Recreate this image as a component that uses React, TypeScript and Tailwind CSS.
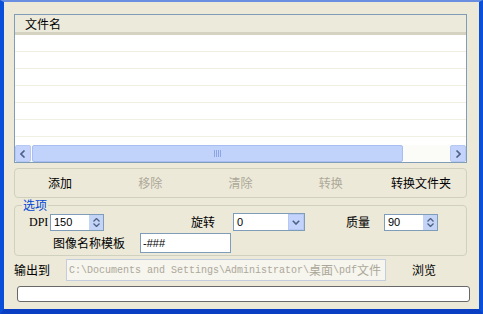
import React from 'react';

const cjk = '"Noto Sans CJK SC", "Liberation Sans", sans-serif';

function Spinner({ value, width }: { value: string; width: string }) {
  return (
    <div className={`flex h-[17px] ${width} border border-[#7F9DB9] bg-white`}>
      <div className="flex-1 pl-[3px] text-[11px] leading-[15px] text-black font-['Liberation_Sans']">{value}</div>
      <div className="flex w-[15px] flex-col items-center justify-center gap-[1px] border-l border-white bg-[#C4D4F7]">
        <svg width="7" height="4" viewBox="0 0 7 4"><path d="M0.5 3.5 L3.5 0.5 L6.5 3.5" fill="none" stroke="#4D6185" strokeWidth="1.3" /></svg>
        <svg width="7" height="4" viewBox="0 0 7 4"><path d="M0.5 0.5 L3.5 3.5 L6.5 0.5" fill="none" stroke="#4D6185" strokeWidth="1.3" /></svg>
      </div>
    </div>
  );
}

function ScrollArrow({ dir }: { dir: 'left' | 'right' }) {
  return (
    <div className="flex h-full w-[16px] items-center justify-center rounded-[2px] border border-[#B5C8F3] bg-[#C3D3FB]">
      <svg width="6" height="8" viewBox="0 0 6 8">
        <path d={dir === 'left' ? 'M4.5 0.5 L1 4 L4.5 7.5' : 'M1.5 0.5 L5 4 L1.5 7.5'} fill="none" stroke="#4D6185" strokeWidth="1.6" />
      </svg>
    </div>
  );
}

export default function App() {
  const rows = Array.from({ length: 7 });
  return (
    <div className="h-[314px] w-[483px] overflow-hidden border-l-4 border-r-4 border-b-[5px] border-t-2 border-l-[#0A4FD9] border-r-[#0A4FD9] border-b-[#0A3FC4] border-t-[#6B8FE0] bg-[#ECE9D8]" style={{ fontFamily: cjk }}>
      <div className="flex flex-col pl-[10px] pt-[12px] text-[12px] text-black">
        {/* file list */}
        <div className="flex h-[149px] w-[453px] flex-col border border-[#7F9DB9] bg-white">
          <div className="flex h-[20px] items-center border-b-[3px] border-b-[#D6D2C2] bg-[#EBEADB] pl-[10px] leading-none">文件名</div>
          <div className="flex-1 overflow-hidden">
            {rows.map((_, i) => (
              <div key={i} className="h-[17px] border-b border-[#F1EFE2]" />
            ))}
          </div>
          <div className="flex h-[17px] items-stretch bg-[#FBFBF8]">
            <ScrollArrow dir="left" />
            <div className="ml-[1px] flex w-[371px] items-center justify-center rounded-[2px] border border-[#A8BEF2] bg-[#C1D3FB]">
              <svg width="8" height="7" viewBox="0 0 8 7">
                <path d="M0.5 0 V7 M2.5 0 V7 M4.5 0 V7 M6.5 0 V7" stroke="#8DA5E4" strokeWidth="1" />
              </svg>
            </div>
            <div className="flex-1 bg-[#FBFBF8]" />
            <ScrollArrow dir="right" />
          </div>
        </div>

        {/* buttons */}
        <div className="mt-[5px] grid h-[30px] w-[453px] grid-cols-5 items-center rounded-[4px] border border-[#D0D0BF]">
          <div className="text-center">添加</div>
          <div className="text-center text-[#ACA899]">移除</div>
          <div className="text-center text-[#ACA899]">清除</div>
          <div className="text-center text-[#ACA899]">转换</div>
          <div className="text-center">转换文件夹</div>
        </div>

        {/* options */}
        <div className="relative mt-[7px] h-[51px] w-[453px] rounded-[4px] border border-[#D0D0BF]">
          <div className="absolute -top-[8px] left-[7px] bg-[#ECE9D8] px-[1px] leading-[14px] text-[#0046D5]">选项</div>
          <div className="flex items-center pt-[7px]">
            <div className="ml-[14px] w-[21px] text-[12px] font-['Liberation_Serif'] leading-none">DPI</div>
            <Spinner value="150" width="w-[54px]" />
            <div className="ml-[87px] w-[42px]">旋转</div>
            <div className="flex h-[18px] w-[72px] border border-[#7F9DB9] bg-white">
              <div className="flex-1 pl-[3px] text-[11px] leading-[16px] font-['Liberation_Sans']">0</div>
              <div className="flex w-[16px] items-center justify-center border border-[#B5C8F3] bg-[#C3D3FB]">
                <svg width="8" height="5" viewBox="0 0 8 5"><path d="M0.8 0.8 L4 4 L7.2 0.8" fill="none" stroke="#4D6185" strokeWidth="1.6" /></svg>
              </div>
            </div>
            <div className="ml-[41px] w-[38px]">质量</div>
            <Spinner value="90" width="w-[54px]" />
          </div>
          <div className="mt-[2px] flex items-center">
            <div className="ml-[38px] w-[87px] text-[12px]">图像名称模板</div>
            <div className="h-[20px] w-[91px] border border-[#7F9DB9] bg-white pl-[2px] text-[11px] leading-[18px] font-['Liberation_Sans']">-###</div>
          </div>
        </div>

        {/* output */}
        <div className="mt-[3px] flex h-[22px] items-center">
          <div className="w-[52px]">输出到</div>
          <div className="flex h-[22px] w-[320px] items-center border border-[#C3CDDD] bg-[#F6F5EE] pl-[2px] text-[#ACA899]">
            <span className="font-['Liberation_Mono'] text-[10px]">C:\Documents and Settings\Administrator\</span>
            <span className="text-[12px]">桌面</span>
            <span className="font-['Liberation_Mono'] text-[10px]">\pdf</span>
            <span className="text-[12px]">文件</span>
          </div>
          <div className="ml-[26px]">浏览</div>
        </div>

        {/* progress */}
        <div className="ml-[3px] mt-[5px] h-[16px] w-[453px] rounded-[3px] border border-[#686868] bg-white" />
      </div>
    </div>
  );
}
